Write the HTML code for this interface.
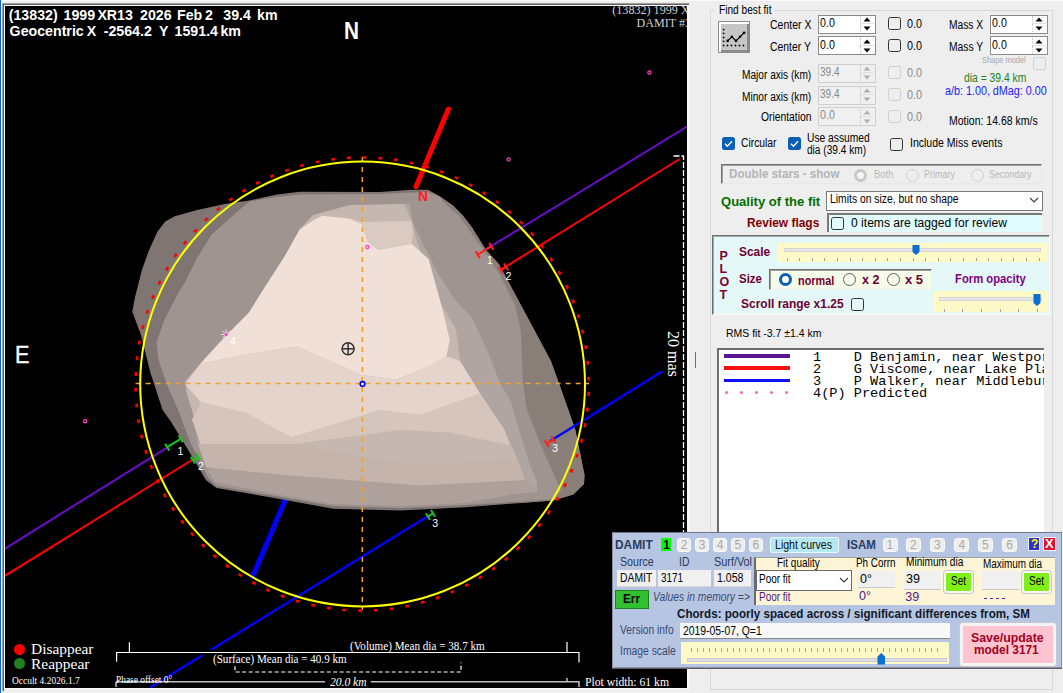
<!DOCTYPE html>
<html><head><meta charset="utf-8"><style>
html,body{margin:0;padding:0;}
body{width:1063px;height:693px;overflow:hidden;position:relative;background:#eeeeee;}
.t{position:absolute;white-space:nowrap;}
.b{position:absolute;}
.plot{position:absolute;left:0;top:0;}
</style></head><body>
<div class="b" style="left:0px;top:0px;width:1063px;height:1px;background:#fafafa"></div><div class="b" style="left:0px;top:0px;width:1px;height:693px;background:#1060d0"></div><div class="b" style="left:1px;top:0px;width:1px;height:693px;background:#f8f8f8"></div><div class="b" style="left:2px;top:3px;width:2px;height:688px;background:#9aa29a"></div><div class="b" style="left:2px;top:3px;width:687px;height:2px;background:#9aa29a"></div><div class="b" style="left:3px;top:4px;width:1px;height:687px;background:#6a5c6a"></div><div class="b" style="left:3px;top:4px;width:686px;height:1px;background:#6a5c6a"></div><div class="b" style="left:4px;top:5px;width:685px;height:684px;background:#fbfbfb"></div><svg class="plot" width="1063" height="693" viewBox="0 0 1063 693">
<defs><clipPath id="pc"><rect x="5" y="6" width="682" height="682"/></clipPath></defs>
<g clip-path="url(#pc)">
<rect x="5" y="6" width="682" height="682" fill="#000"/>
<line x1="286" y1="498" x2="252.7" y2="576.5" stroke="#0000ff" stroke-width="5" stroke-linecap="round"/>
<polygon points="132.3,311.7 134.9,297.6 141.9,269.9 148.8,250.8 157.4,231.8 165.2,221.4 174.8,216.2 197.3,210.1 225,204 249.3,200.6 277,194.5 300,191.8 380,191.9 411.7,189.8 427.6,189.8 440.3,196.7 453,205.4 462.5,215 472,227.6 486,250 499,264.2 530,322 551,361.2 561.2,389.5 575.4,430 584.5,475 584,484 573.3,494.5 553.1,500.6 520.8,503 466,507.2 400,510.6 333,508.8 284,499.7 216.4,488 206,480.3 186.4,447 170.5,421 162.6,410 150.5,373.1 141,335" fill="#7f7572"/>
<polygon points="427.6,189.8 440.3,196.7 453,205.4 462.5,215 472,227.6 486,250 499,264.2 530,322 551,361.2 561.2,389.5 575.4,430 584.5,475 584,484 573.3,494.5 553.1,500.6 520,503 500,470 480,300 440,200" fill="#8a7e79"/>
<polygon points="249.3,201.5 277,197 300,194.5 380,194 411.7,192.5 427.6,192 440.3,196.7 443.5,202.2 459.4,216.5 472,234 485,252 500,275 515,305 520.8,331 522.8,381.4 526.9,409.7 543,450 561.2,490.5 553,499 520.8,501.5 466,505 400,508 333,506 284,497.5 216.4,486 208,478 190,442 178.2,410 167.8,387 158.3,359.3 156.6,342 164.4,319.4 180,290 185.2,282 197.3,257.8 211.1,235.2 231.9,216.2" fill="#a09490"/>
<polygon points="324,212.7 299.7,229.4 284.5,256.7 263,290 249,312.5 225,336.8 200.8,362.8 185.2,381.8 186.9,394 192,410 198,444 215,471.5 320,493 420,500 537,492 537,482 530,465 522,440 511,402 500,383 488,352 472,318 455,300 437,272 430,257 421,240 412,220 410,204 385,204.5 351.5,208.2 321,213.9" fill="#b1a5a1"/>
<polygon points="313,215 350,205 404,204 412,221 416.5,240.3 426,265.7 438,299.8 456,329 460,361 480,393.5 504.6,430 516.8,458.2 525,480 420,490 320,485 215,468 200,444 192,410 186.9,394 185.2,381.8 200.8,362.8 225,336.8 249,312.5 263,290 284.5,256.7 299.7,229.4" fill="#c6b7b0"/>
<polygon points="349.7,218.8 361,222 411.7,221 413,232 411.7,244 378,250 368,242 361,224" fill="#dacac2"/>
<polygon points="313.3,220.3 322.4,215.8 349.7,218.8 361,224 368,242 378,250 411.7,244 428.6,259 440,300 449.8,339.8 446.4,356.2 429.8,366.1 396.6,379.4 361.8,375 335.8,363.4 296.9,346.5 247.5,354.3 200.8,363.4 225,336.8 249,312.5 263,290 284.5,256.7 299.7,229.4" fill="#f0e0d8"/>
<polygon points="185.2,384 200.8,363.4 247.5,354.3 296.9,346.5 335.8,363.4 361.8,375 396.6,379.4 429.8,366.1 446.4,356.2 460,361 480,393.5 420,415 380,410 291.7,437.4 245,412.7 200.8,402.3" fill="#e4d4cc"/>
<polygon points="200.8,402.3 245,412.7 291.7,437.4 380,410 420,415 480,393.5 504.6,430 510,445 449.8,432.6 400,430 294.3,444 200.8,444 192,420" fill="#d6c5bc"/>
<polygon points="198,444 294.3,444 361.8,456.9 420,464.7 466.3,462.5 516.8,458.2 525,480 420,485.5 284,475 206,467.3" fill="#c4b4ab"/>
<polygon points="206,467.3 284,475 420,485.5 525,480 537,490 466,503 400,506 333,504 284,495.8 215,482" fill="#aea09b"/>
<g stroke-width="2" fill="none">
<line x1="5" y1="548.6" x2="167.5" y2="447.3" stroke="#6a0dcc"/>
<line x1="484.5" y1="250.2" x2="690" y2="124.8" stroke="#6a0dcc"/>
<line x1="5" y1="575.8" x2="193.5" y2="459" stroke="#ff0000"/>
<line x1="500.5" y1="269.9" x2="679.6" y2="159" stroke="#ff0000"/>
<line x1="150" y1="687.5" x2="429" y2="515.5" stroke="#0000ff" stroke-width="2.5"/>
<line x1="550.3" y1="441" x2="662.4" y2="371.3" stroke="#0000ff" stroke-width="2.5"/>
</g>
<line x1="448.4" y1="109" x2="416" y2="186.7" stroke="#ff0000" stroke-width="5" stroke-linecap="round"/>
<g stroke="#f0a030" stroke-width="1.5" fill="none">
<line x1="135.6" y1="383.6" x2="589" y2="383.6" stroke-dasharray="5 5"/>
<line x1="362.3" y1="157" x2="362.3" y2="610" stroke-dasharray="5 5"/>
</g>
<circle cx="362.6" cy="384" r="222.4" fill="none" stroke="#ffff00" stroke-width="2"/>
<circle cx="362.2" cy="384" r="226.6" fill="none" stroke="#ff0000" stroke-width="2.6" stroke-dasharray="3.9 11.919" stroke-dashoffset="7.9"/>
<path d="M673.5 156 H683.5 V620" fill="none" stroke="#fff" stroke-width="1.3" stroke-dasharray="6 2"/>
<circle cx="362.5" cy="383.9" r="2.3" fill="#fff" stroke="#0000ff" stroke-width="1.6"/>
<g stroke="#303030" stroke-width="1.5" fill="none"><circle cx="348.1" cy="348.8" r="6"/><line x1="342" y1="348.8" x2="354.2" y2="348.8"/><line x1="348.1" y1="342.7" x2="348.1" y2="354.9"/></g>
<circle cx="85.2" cy="421.3" r="1.6" fill="none" stroke="#ff40c0" stroke-width="1.2"/>
<circle cx="508.6" cy="159.4" r="1.6" fill="none" stroke="#ff40c0" stroke-width="1.2"/>
<circle cx="649.4" cy="72.5" r="1.6" fill="none" stroke="#ff40c0" stroke-width="1.2"/>
<circle cx="367.3" cy="247" r="1.6" fill="none" stroke="#ff40c0" stroke-width="1.2"/>
<g stroke="#f0d0f0" stroke-width="1"><line x1="221" y1="334.4" x2="231" y2="334.4"/><line x1="226.1" y1="329.5" x2="226.1" y2="339.5"/><line x1="222.5" y1="330.8" x2="229.7" y2="338"/><line x1="229.7" y1="330.8" x2="222.5" y2="338"/></g>
<circle cx="226.1" cy="334.4" r="1.5" fill="#ff40c0"/>
<g transform="translate(484.5 250.5) rotate(-31.7)" stroke="#ff2020" stroke-width="2" fill="none"><line x1="-8" y1="0" x2="8" y2="0"/><line x1="-8" y1="-4" x2="-8" y2="4"/><line x1="8" y1="-4" x2="8" y2="4"/></g>
<g transform="translate(503.5 268.5) rotate(-31.7)" stroke="#ff2020" stroke-width="2" fill="none"><line x1="-3" y1="0" x2="3" y2="0"/><line x1="-3" y1="-4" x2="-3" y2="4"/><line x1="3" y1="-4" x2="3" y2="4"/></g>
<g transform="translate(550 441.5) rotate(-31.7)" stroke="#ff2020" stroke-width="2" fill="none"><line x1="-4" y1="0" x2="4" y2="0"/><line x1="-4" y1="-4" x2="-4" y2="4"/><line x1="4" y1="-4" x2="4" y2="4"/></g>
<g transform="translate(174 443) rotate(-31.7)" stroke="#20c020" stroke-width="2" fill="none"><line x1="-8" y1="0" x2="8" y2="0"/><line x1="-8" y1="-4" x2="-8" y2="4"/><line x1="8" y1="-4" x2="8" y2="4"/></g>
<g transform="translate(195.5 458.5) rotate(-31.7)" stroke="#20c020" stroke-width="2" fill="none"><line x1="-3" y1="0" x2="3" y2="0"/><line x1="-3" y1="-4" x2="-3" y2="4"/><line x1="3" y1="-4" x2="3" y2="4"/></g>
<g transform="translate(430.5 515) rotate(-31.7)" stroke="#20c020" stroke-width="2" fill="none"><line x1="-3" y1="0" x2="3" y2="0"/><line x1="-3" y1="-4" x2="-3" y2="4"/><line x1="3" y1="-4" x2="3" y2="4"/></g>
<rect x="116" y="649.8" width="464" height="5.4" fill="#000"/>
<g stroke="#fff" stroke-width="1.2" fill="none">
<path d="M116.6 661.8 V652.5 H579 V662.5"/>
<path d="M129.4 642.2 V652.5 M567 641.9 V652"/>
<path d="M235 666.2 V672 H461 V662.5" stroke-dasharray="4 2.5"/>
</g>
<g stroke="#c0c0c0" stroke-width="1.5" fill="none"><path d="M116 681.8 H325 M370.8 681.8 H579 V687 M567 678 V681.8 M116 681.8 V687"/></g>
</g></svg><div style="position:absolute;left:5px;top:6px;width:682px;height:682px;overflow:hidden"><div style="position:absolute;left:-5px;top:-6px"><div class="t" style="left:8.75px;top:8.34px;font:normal bold 14.20px/1 'Liberation Sans', sans-serif;color:#ffffff;">(13832)</div>
<div class="t" style="left:63.50px;top:8.34px;font:normal bold 14.20px/1 'Liberation Sans', sans-serif;color:#ffffff;">1999</div>
<div class="t" style="left:97.40px;top:8.34px;font:normal bold 14.20px/1 'Liberation Sans', sans-serif;color:#ffffff;">XR13</div>
<div class="t" style="left:140.00px;top:8.34px;font:normal bold 14.20px/1 'Liberation Sans', sans-serif;color:#ffffff;">2026</div>
<div class="t" style="left:177.00px;top:8.34px;font:normal bold 14.20px/1 'Liberation Sans', sans-serif;color:#ffffff;">Feb</div>
<div class="t" style="left:204.90px;top:8.34px;font:normal bold 14.20px/1 'Liberation Sans', sans-serif;color:#ffffff;">2</div>
<div class="t" style="left:223.30px;top:8.34px;font:normal bold 14.20px/1 'Liberation Sans', sans-serif;color:#ffffff;">39.4</div>
<div class="t" style="left:257.10px;top:8.34px;font:normal bold 14.20px/1 'Liberation Sans', sans-serif;color:#ffffff;">km</div>
<div class="t" style="left:9.60px;top:23.84px;font:normal bold 14.20px/1 'Liberation Sans', sans-serif;color:#ffffff;">Geocentric</div>
<div class="t" style="left:86.80px;top:23.84px;font:normal bold 14.20px/1 'Liberation Sans', sans-serif;color:#ffffff;">X</div>
<div class="t" style="left:103.70px;top:23.84px;font:normal bold 14.20px/1 'Liberation Sans', sans-serif;color:#ffffff;">-2564.2</div>
<div class="t" style="left:159.00px;top:23.84px;font:normal bold 14.20px/1 'Liberation Sans', sans-serif;color:#ffffff;">Y</div>
<div class="t" style="left:174.60px;top:23.84px;font:normal bold 14.20px/1 'Liberation Sans', sans-serif;color:#ffffff;">1591.4</div>
<div class="t" style="left:220.40px;top:23.84px;font:normal bold 14.20px/1 'Liberation Sans', sans-serif;color:#ffffff;">km</div>
<div class="t" style="left:343.90px;top:20.46px;font:normal bold 23.50px/1 'Liberation Sans', sans-serif;color:#ffffff;transform:scaleX(0.8841);transform-origin:0 0;">N</div>
<div class="t" style="left:14.70px;top:342.68px;font:normal normal 24.00px/1 'Liberation Sans', sans-serif;color:#ffffff;transform:scaleX(0.8996);transform-origin:0 0;-webkit-text-stroke:0.4px #fff;">E</div>
<div class="t" style="left:418.00px;top:189.07px;font:normal bold 14.00px/1 'Liberation Sans', sans-serif;color:#ff2020;transform:scaleX(0.9893);transform-origin:0 0;">N</div>
<div class="t" style="left:487.00px;top:254.73px;font:normal normal 10.50px/1 'Liberation Sans', sans-serif;color:#ffffff;">1</div>
<div class="t" style="left:505.40px;top:270.63px;font:normal normal 10.50px/1 'Liberation Sans', sans-serif;color:#ffffff;">2</div>
<div class="t" style="left:552.30px;top:443.33px;font:normal normal 10.50px/1 'Liberation Sans', sans-serif;color:#ffffff;">3</div>
<div class="t" style="left:177.40px;top:445.63px;font:normal normal 10.50px/1 'Liberation Sans', sans-serif;color:#ffffff;">1</div>
<div class="t" style="left:198.00px;top:461.23px;font:normal normal 10.50px/1 'Liberation Sans', sans-serif;color:#ffffff;">2</div>
<div class="t" style="left:432.30px;top:517.53px;font:normal normal 10.50px/1 'Liberation Sans', sans-serif;color:#ffffff;">3</div>
<div class="t" style="left:230.00px;top:336.33px;font:normal normal 10.50px/1 'Liberation Sans', sans-serif;color:#ffffff;">4</div>
<div class="t" style="left:612.30px;top:4.39px;font:normal normal 12.10px/1 'Liberation Serif', serif;color:#d0d0d0;">(13832) 1999 XR13</div>
<div class="t" style="left:636.60px;top:17.19px;font:normal normal 12.10px/1 'Liberation Serif', serif;color:#d0d0d0;">DAMIT #3171</div>
<div class="b" style="left:14px;top:643.5px;width:11px;height:11px;border-radius:50%;background:#ff0000"></div>
<div class="b" style="left:14px;top:657.5px;width:11px;height:11px;border-radius:50%;background:#208020"></div>
<div class="t" style="left:31.00px;top:641.21px;font:normal normal 15.30px/1 'Liberation Serif', serif;color:#ffffff;transform:scaleX(1.0076);transform-origin:0 0;">Disappear</div>
<div class="t" style="left:31.00px;top:655.81px;font:normal normal 15.30px/1 'Liberation Serif', serif;color:#ffffff;transform:scaleX(1.0111);transform-origin:0 0;">Reappear</div>
<div class="t" style="left:12.20px;top:675.09px;font:normal normal 11.00px/1 'Liberation Serif', serif;color:#ffffff;transform:scaleX(0.8601);transform-origin:0 0;">Occult 4.2026.1.7</div>
<div class="t" style="left:349.60px;top:640.22px;font:normal normal 12.50px/1 'Liberation Serif', serif;color:#ffffff;transform:scaleX(0.8907);transform-origin:0 0;">(Volume) Mean dia = 38.7 km</div>
<div class="t" style="left:213.00px;top:652.72px;font:normal normal 12.50px/1 'Liberation Serif', serif;color:#ffffff;transform:scaleX(0.8862);transform-origin:0 0;">(Surface) Mean dia = 40.9 km</div>
<div class="t" style="left:116.00px;top:675.17px;font:normal normal 10.00px/1 'Liberation Serif', serif;color:#ffffff;transform:scaleX(0.9379);transform-origin:0 0;">Phase offset 0°</div>
<div class="t" style="left:330.00px;top:674.94px;font:italic normal 13.50px/1 'Liberation Serif', serif;color:#ffffff;transform:scaleX(0.8563);transform-origin:0 0;">20.0 km</div>
<div class="t" style="left:585.30px;top:674.94px;font:normal normal 13.50px/1 'Liberation Serif', serif;color:#ffffff;transform:scaleX(0.8648);transform-origin:0 0;">Plot width: 61 km</div>
<div class="t" style="left:680.70px;top:331.3px;font:16.00px/1 'Liberation Serif',serif;color:#fff;transform:rotate(90deg);transform-origin:0 0;">20 mas</div></div></div><div class="b" style="left:710px;top:9.5px;width:343px;height:680px;border:1px solid #d8d8d8;box-sizing:border-box"></div>
<div class="b" style="left:715px;top:2px;width:60px;height:14px;background:#eeeeee"></div>
<div class="t" style="left:718.50px;top:4.26px;font:normal normal 12.20px/1 'Liberation Sans', sans-serif;color:#000;transform:scaleX(0.8325);transform-origin:0 0;">Find best fit</div>
<div class="b" style="left:718px;top:21px;width:32px;height:32px;background:#c6c6c6;border:1px solid #8a8e8a;box-shadow:inset 2px 2px #ffffff, inset -2px -2px #8a8a8a;box-sizing:border-box"></div>
<svg class="b" style="left:718px;top:21px" width="32" height="32"><g fill="#000"><circle cx="5.6" cy="8.6" r="0.9"/><circle cx="5.6" cy="12.3" r="0.9"/><circle cx="5.6" cy="16.5" r="0.9"/><circle cx="5.6" cy="20.3" r="0.9"/><circle cx="5.6" cy="24.5" r="0.9"/><circle cx="9.5" cy="24.5" r="0.9"/><circle cx="13.5" cy="24.5" r="0.9"/><circle cx="17.5" cy="24.5" r="0.9"/><circle cx="21.5" cy="24.5" r="0.9"/><circle cx="25.5" cy="24.5" r="0.9"/></g><path d="M9.6 19.9 L13.9 15.8 L18 19.9 L22 15.8 L26.1 11.8" stroke="#000" stroke-width="1.2" fill="none"/><g fill="#000"><circle cx="9.6" cy="19.9" r="1.3"/><circle cx="13.9" cy="15.8" r="1.3"/><circle cx="18" cy="19.9" r="1.3"/><circle cx="22" cy="15.8" r="1.3"/><circle cx="26.1" cy="11.8" r="1.4"/></g></svg>
<div class="t" style="left:770.20px;top:18.61px;font:normal normal 12.50px/1 'Liberation Sans', sans-serif;color:#000;transform:scaleX(0.8393);transform-origin:0 0;">Center X</div>
<div class="t" style="left:770.20px;top:40.61px;font:normal normal 12.50px/1 'Liberation Sans', sans-serif;color:#000;transform:scaleX(0.8310);transform-origin:0 0;">Center Y</div>
<div class="t" style="left:742.40px;top:69.21px;font:normal normal 12.50px/1 'Liberation Sans', sans-serif;color:#000;transform:scaleX(0.8101);transform-origin:0 0;">Major axis (km)</div>
<div class="t" style="left:742.40px;top:91.21px;font:normal normal 12.50px/1 'Liberation Sans', sans-serif;color:#000;transform:scaleX(0.8101);transform-origin:0 0;">Minor axis (km)</div>
<div class="t" style="left:760.50px;top:111.01px;font:normal normal 12.50px/1 'Liberation Sans', sans-serif;color:#000;transform:scaleX(0.8258);transform-origin:0 0;">Orientation</div>
<div class="b" style="left:818px;top:14.5px;width:58px;height:19px;border:1px solid #8a8a8a;background:#ffffff;box-sizing:border-box"></div>
<div class="b" style="left:860px;top:16px;width:14px;height:8px;border-left:1px dotted #c8c8c8;border-bottom:1px solid #e0e0e0;box-sizing:border-box"></div>
<div class="b" style="left:860px;top:24px;width:14px;height:8px;border-left:1px dotted #c8c8c8;box-sizing:border-box"></div>
<svg class="b" style="left:860px;top:15px" width="14" height="18"><path d="M3.5 6.5 L7 2.5 L10.5 6.5Z M3.5 11.5 L7 15.5 L10.5 11.5Z" fill="#000000"/></svg>
<div class="t" style="left:820.30px;top:16.79px;font:normal normal 12.00px/1 'Liberation Sans', sans-serif;color:#000000;transform:scaleX(0.8873);transform-origin:0 0;">0.0</div>
<div class="b" style="left:818px;top:36.3px;width:58px;height:19px;border:1px solid #8a8a8a;background:#ffffff;box-sizing:border-box"></div>
<div class="b" style="left:860px;top:37.8px;width:14px;height:8px;border-left:1px dotted #c8c8c8;border-bottom:1px solid #e0e0e0;box-sizing:border-box"></div>
<div class="b" style="left:860px;top:45.8px;width:14px;height:8px;border-left:1px dotted #c8c8c8;box-sizing:border-box"></div>
<svg class="b" style="left:860px;top:36.8px" width="14" height="18"><path d="M3.5 6.5 L7 2.5 L10.5 6.5Z M3.5 11.5 L7 15.5 L10.5 11.5Z" fill="#000000"/></svg>
<div class="t" style="left:820.30px;top:38.59px;font:normal normal 12.00px/1 'Liberation Sans', sans-serif;color:#000000;transform:scaleX(0.8873);transform-origin:0 0;">0.0</div>
<div class="b" style="left:818px;top:63.7px;width:58px;height:19px;border:1px solid #cfcfcf;background:#f0f0f0;box-sizing:border-box"></div>
<div class="b" style="left:860px;top:65.2px;width:14px;height:8px;border-left:1px dotted #c8c8c8;border-bottom:1px solid #e0e0e0;box-sizing:border-box"></div>
<div class="b" style="left:860px;top:73.2px;width:14px;height:8px;border-left:1px dotted #c8c8c8;box-sizing:border-box"></div>
<svg class="b" style="left:860px;top:64.2px" width="14" height="18"><path d="M3.5 6.5 L7 2.5 L10.5 6.5Z M3.5 11.5 L7 15.5 L10.5 11.5Z" fill="#b0b0b0"/></svg>
<div class="t" style="left:820.30px;top:65.99px;font:normal normal 12.00px/1 'Liberation Sans', sans-serif;color:#8a8a8a;transform:scaleX(0.8350);transform-origin:0 0;">39.4</div>
<div class="b" style="left:818px;top:85.6px;width:58px;height:19px;border:1px solid #cfcfcf;background:#f0f0f0;box-sizing:border-box"></div>
<div class="b" style="left:860px;top:87.1px;width:14px;height:8px;border-left:1px dotted #c8c8c8;border-bottom:1px solid #e0e0e0;box-sizing:border-box"></div>
<div class="b" style="left:860px;top:95.1px;width:14px;height:8px;border-left:1px dotted #c8c8c8;box-sizing:border-box"></div>
<svg class="b" style="left:860px;top:86.1px" width="14" height="18"><path d="M3.5 6.5 L7 2.5 L10.5 6.5Z M3.5 11.5 L7 15.5 L10.5 11.5Z" fill="#b0b0b0"/></svg>
<div class="t" style="left:820.30px;top:87.89px;font:normal normal 12.00px/1 'Liberation Sans', sans-serif;color:#8a8a8a;transform:scaleX(0.8350);transform-origin:0 0;">39.4</div>
<div class="b" style="left:818px;top:107.2px;width:58px;height:19px;border:1px solid #cfcfcf;background:#f0f0f0;box-sizing:border-box"></div>
<div class="b" style="left:860px;top:108.7px;width:14px;height:8px;border-left:1px dotted #c8c8c8;border-bottom:1px solid #e0e0e0;box-sizing:border-box"></div>
<div class="b" style="left:860px;top:116.7px;width:14px;height:8px;border-left:1px dotted #c8c8c8;box-sizing:border-box"></div>
<svg class="b" style="left:860px;top:107.7px" width="14" height="18"><path d="M3.5 6.5 L7 2.5 L10.5 6.5Z M3.5 11.5 L7 15.5 L10.5 11.5Z" fill="#b0b0b0"/></svg>
<div class="t" style="left:820.30px;top:109.49px;font:normal normal 12.00px/1 'Liberation Sans', sans-serif;color:#8a8a8a;transform:scaleX(0.8873);transform-origin:0 0;">0.0</div>
<div class="b" style="left:888px;top:17.3px;width:13px;height:13px;border:1px solid #333333;border-radius:2.5px;box-sizing:border-box;background:transparent"></div>
<div class="t" style="left:907.00px;top:18.11px;font:normal normal 12.50px/1 'Liberation Sans', sans-serif;color:#000;transform:scaleX(0.8633);transform-origin:0 0;">0.0</div>
<div class="b" style="left:888px;top:39.3px;width:13px;height:13px;border:1px solid #333333;border-radius:2.5px;box-sizing:border-box;background:transparent"></div>
<div class="t" style="left:907.00px;top:40.11px;font:normal normal 12.50px/1 'Liberation Sans', sans-serif;color:#000;transform:scaleX(0.8633);transform-origin:0 0;">0.0</div>
<div class="b" style="left:888px;top:66.2px;width:13px;height:13px;border:1px solid #d0d0d0;border-radius:2.5px;box-sizing:border-box;background:transparent"></div>
<div class="t" style="left:907.00px;top:67.01px;font:normal normal 12.50px/1 'Liberation Sans', sans-serif;color:#8a8a8a;transform:scaleX(0.8633);transform-origin:0 0;">0.0</div>
<div class="b" style="left:888px;top:88.3px;width:13px;height:13px;border:1px solid #d0d0d0;border-radius:2.5px;box-sizing:border-box;background:transparent"></div>
<div class="t" style="left:907.00px;top:89.11px;font:normal normal 12.50px/1 'Liberation Sans', sans-serif;color:#8a8a8a;transform:scaleX(0.8633);transform-origin:0 0;">0.0</div>
<div class="b" style="left:888px;top:109.8px;width:13px;height:13px;border:1px solid #d0d0d0;border-radius:2.5px;box-sizing:border-box;background:transparent"></div>
<div class="t" style="left:907.00px;top:110.61px;font:normal normal 12.50px/1 'Liberation Sans', sans-serif;color:#8a8a8a;transform:scaleX(0.8633);transform-origin:0 0;">0.0</div>
<div class="t" style="left:949.30px;top:19.01px;font:normal normal 12.50px/1 'Liberation Sans', sans-serif;color:#000;transform:scaleX(0.8182);transform-origin:0 0;">Mass X</div>
<div class="t" style="left:949.30px;top:41.01px;font:normal normal 12.50px/1 'Liberation Sans', sans-serif;color:#000;transform:scaleX(0.8227);transform-origin:0 0;">Mass Y</div>
<div class="b" style="left:990px;top:14.5px;width:58px;height:19px;border:1px solid #8a8a8a;background:#ffffff;box-sizing:border-box"></div>
<div class="b" style="left:1032px;top:16px;width:14px;height:8px;border-left:1px dotted #c8c8c8;border-bottom:1px solid #e0e0e0;box-sizing:border-box"></div>
<div class="b" style="left:1032px;top:24px;width:14px;height:8px;border-left:1px dotted #c8c8c8;box-sizing:border-box"></div>
<svg class="b" style="left:1032px;top:15px" width="14" height="18"><path d="M3.5 6.5 L7 2.5 L10.5 6.5Z M3.5 11.5 L7 15.5 L10.5 11.5Z" fill="#000000"/></svg>
<div class="t" style="left:992.30px;top:16.79px;font:normal normal 12.00px/1 'Liberation Sans', sans-serif;color:#000000;transform:scaleX(0.8873);transform-origin:0 0;">0.0</div>
<div class="b" style="left:990px;top:36.3px;width:58px;height:19px;border:1px solid #8a8a8a;background:#ffffff;box-sizing:border-box"></div>
<div class="b" style="left:1032px;top:37.8px;width:14px;height:8px;border-left:1px dotted #c8c8c8;border-bottom:1px solid #e0e0e0;box-sizing:border-box"></div>
<div class="b" style="left:1032px;top:45.8px;width:14px;height:8px;border-left:1px dotted #c8c8c8;box-sizing:border-box"></div>
<svg class="b" style="left:1032px;top:36.8px" width="14" height="18"><path d="M3.5 6.5 L7 2.5 L10.5 6.5Z M3.5 11.5 L7 15.5 L10.5 11.5Z" fill="#000000"/></svg>
<div class="t" style="left:992.30px;top:38.59px;font:normal normal 12.00px/1 'Liberation Sans', sans-serif;color:#000000;transform:scaleX(0.8873);transform-origin:0 0;">0.0</div>
<div class="t" style="left:982.00px;top:56.37px;font:normal normal 9.00px/1 'Liberation Sans', sans-serif;color:#a8a8a8;transform:scaleX(0.8240);transform-origin:0 0;">Shape model</div>
<div class="b" style="left:1033px;top:56.6px;width:13px;height:13px;border:1px solid #d0d0d0;border-radius:2.5px;box-sizing:border-box;background:transparent"></div>
<div class="t" style="left:964.00px;top:72.01px;font:normal normal 12.50px/1 'Liberation Sans', sans-serif;color:#208020;transform:scaleX(0.8277);transform-origin:0 0;">dia = 39.4 km</div>
<div class="t" style="left:945.30px;top:84.81px;font:normal normal 12.50px/1 'Liberation Sans', sans-serif;color:#2020ff;transform:scaleX(0.8609);transform-origin:0 0;">a/b: 1.00, dMag: 0.00</div>
<div class="t" style="left:949.30px;top:114.91px;font:normal normal 12.50px/1 'Liberation Sans', sans-serif;color:#000;transform:scaleX(0.8400);transform-origin:0 0;">Motion: 14.68 km/s</div>
<div class="b" style="left:722px;top:137.2px;width:13px;height:13px;background:#0a5fb4;border-radius:2.5px"></div><svg class="b" style="left:722px;top:137.2px" width="13" height="13"><path d="M3 6.8 L5.4 9.2 L10 4.2" stroke="#fff" stroke-width="1.3" fill="none"/></svg>
<div class="t" style="left:740.60px;top:137.21px;font:normal normal 12.50px/1 'Liberation Sans', sans-serif;color:#000;transform:scaleX(0.8221);transform-origin:0 0;">Circular</div>
<div class="b" style="left:788px;top:137.2px;width:13px;height:13px;background:#0a5fb4;border-radius:2.5px"></div><svg class="b" style="left:788px;top:137.2px" width="13" height="13"><path d="M3 6.8 L5.4 9.2 L10 4.2" stroke="#fff" stroke-width="1.3" fill="none"/></svg>
<div class="t" style="left:807.30px;top:131.81px;font:normal normal 12.50px/1 'Liberation Sans', sans-serif;color:#000;transform:scaleX(0.8204);transform-origin:0 0;">Use assumed</div>
<div class="t" style="left:807.30px;top:144.31px;font:normal normal 12.50px/1 'Liberation Sans', sans-serif;color:#000;transform:scaleX(0.8089);transform-origin:0 0;">dia (39.4 km)</div>
<div class="b" style="left:890px;top:137.6px;width:13px;height:13px;border:1px solid #333333;border-radius:2.5px;box-sizing:border-box;background:transparent"></div>
<div class="t" style="left:909.60px;top:137.11px;font:normal normal 12.50px/1 'Liberation Sans', sans-serif;color:#000;transform:scaleX(0.8417);transform-origin:0 0;">Include Miss events</div>
<div class="b" style="left:721px;top:164px;width:321px;height:20px;border:1px solid;border-color:#707070 #e8e8e8 #e8e8e8 #707070;box-shadow:inset 1px 1px #a0a0a0;box-sizing:border-box"></div>
<div class="t" style="left:728.50px;top:168.01px;font:normal bold 12.50px/1 'Liberation Sans', sans-serif;color:#b4b4b4;transform:scaleX(0.9301);transform-origin:0 0;">Double stars - show</div>
<div class="b" style="left:854px;top:168.6px;width:13px;height:13px;border:3.5px solid #c8c8c8;border-radius:50%;box-sizing:border-box;background:#f4f4f4"></div>
<div class="t" style="left:873.50px;top:169.25px;font:normal normal 11.00px/1 'Liberation Sans', sans-serif;color:#b8b8b8;transform:scaleX(0.8618);transform-origin:0 0;">Both</div>
<div class="b" style="left:906px;top:168.6px;width:13px;height:13px;border:1px solid #d0d0d0;border-radius:50%;box-sizing:border-box"></div>
<div class="t" style="left:924.00px;top:169.25px;font:normal normal 11.00px/1 'Liberation Sans', sans-serif;color:#b8b8b8;transform:scaleX(0.8183);transform-origin:0 0;">Primary</div>
<div class="b" style="left:970.7px;top:168.6px;width:13px;height:13px;border:1px solid #d0d0d0;border-radius:50%;box-sizing:border-box"></div>
<div class="t" style="left:989.00px;top:169.25px;font:normal normal 11.00px/1 'Liberation Sans', sans-serif;color:#b8b8b8;transform:scaleX(0.8081);transform-origin:0 0;">Secondary</div>
<div class="t" style="left:720.80px;top:196.16px;font:normal bold 12.80px/1 'Liberation Sans', sans-serif;color:#007000;transform:scaleX(1.0183);transform-origin:0 0;">Quality of the fit</div>
<div class="b" style="left:826.3px;top:190.6px;width:216.4px;height:20px;background:#fff;border:1px solid #7a7a7a;box-sizing:border-box"></div>
<div class="t" style="left:829.50px;top:192.61px;font:normal normal 12.50px/1 'Liberation Sans', sans-serif;color:#000;transform:scaleX(0.8293);transform-origin:0 0;">Limits on size, but no shape</div>
<svg class="b" style="left:1029px;top:196px" width="10" height="8"><path d="M1 2 L5 6 L9 2" stroke="#404040" stroke-width="1.2" fill="none"/></svg>
<div class="t" style="left:746.70px;top:216.76px;font:normal bold 12.80px/1 'Liberation Sans', sans-serif;color:#800000;transform:scaleX(0.9324);transform-origin:0 0;">Review flags</div>
<div class="b" style="left:826.8px;top:213px;width:215px;height:19px;background:#e0fcfc;border-top:2px solid #787878;border-left:2px solid #787878;box-sizing:border-box"></div>
<div class="b" style="left:831px;top:216.8px;width:13px;height:13px;border:1px solid #333333;border-radius:2.5px;box-sizing:border-box;background:transparent"></div>
<div class="t" style="left:850.50px;top:216.61px;font:normal normal 12.50px/1 'Liberation Sans', sans-serif;color:#000;transform:scaleX(0.9676);transform-origin:0 0;">0 items are tagged for review</div>
<div class="b" style="left:711.8px;top:234.8px;width:338px;height:80.2px;background:#e4f8f8;border:1px solid;border-color:#707070 #f8f8f8 #f8f8f8 #707070;box-shadow:inset 1px 1px #a8a8a8;box-sizing:border-box"></div>
<div class="t" style="left:719.50px;top:249.71px;font:normal bold 12.50px/1 'Liberation Sans', sans-serif;color:#800030;">P</div>
<div class="t" style="left:719.50px;top:262.71px;font:normal bold 12.50px/1 'Liberation Sans', sans-serif;color:#800030;">L</div>
<div class="t" style="left:719.50px;top:275.71px;font:normal bold 12.50px/1 'Liberation Sans', sans-serif;color:#800030;">O</div>
<div class="t" style="left:719.50px;top:288.61px;font:normal bold 12.50px/1 'Liberation Sans', sans-serif;color:#800030;">T</div>
<div class="t" style="left:739.40px;top:246.26px;font:normal bold 12.80px/1 'Liberation Sans', sans-serif;color:#700030;transform:scaleX(0.9328);transform-origin:0 0;">Scale</div>
<div class="b" style="left:778px;top:243px;width:269px;height:18.5px;background:#fff9c8"></div>
<div class="b" style="left:784px;top:248.2px;width:257px;height:4px;background:#e6e6e6;border:1px solid #d6d6d6;box-sizing:border-box"></div>
<div class="b" style="left:786.5px;top:258px;width:1px;height:3px;background:#a0a0a0"></div>
<div class="b" style="left:799.1px;top:258px;width:1px;height:3px;background:#a0a0a0"></div>
<div class="b" style="left:811.7px;top:258px;width:1px;height:3px;background:#a0a0a0"></div>
<div class="b" style="left:824.3px;top:258px;width:1px;height:3px;background:#a0a0a0"></div>
<div class="b" style="left:836.9px;top:258px;width:1px;height:3px;background:#a0a0a0"></div>
<div class="b" style="left:849.5px;top:258px;width:1px;height:3px;background:#a0a0a0"></div>
<div class="b" style="left:862.1px;top:258px;width:1px;height:3px;background:#a0a0a0"></div>
<div class="b" style="left:874.7px;top:258px;width:1px;height:3px;background:#a0a0a0"></div>
<div class="b" style="left:887.3px;top:258px;width:1px;height:3px;background:#a0a0a0"></div>
<div class="b" style="left:899.9px;top:258px;width:1px;height:3px;background:#a0a0a0"></div>
<div class="b" style="left:912.5px;top:258px;width:1px;height:3px;background:#a0a0a0"></div>
<div class="b" style="left:925.1px;top:258px;width:1px;height:3px;background:#a0a0a0"></div>
<div class="b" style="left:937.7px;top:258px;width:1px;height:3px;background:#a0a0a0"></div>
<div class="b" style="left:950.3px;top:258px;width:1px;height:3px;background:#a0a0a0"></div>
<div class="b" style="left:962.9px;top:258px;width:1px;height:3px;background:#a0a0a0"></div>
<div class="b" style="left:975.5px;top:258px;width:1px;height:3px;background:#a0a0a0"></div>
<div class="b" style="left:988.1px;top:258px;width:1px;height:3px;background:#a0a0a0"></div>
<div class="b" style="left:1000.7px;top:258px;width:1px;height:3px;background:#a0a0a0"></div>
<div class="b" style="left:1013.3px;top:258px;width:1px;height:3px;background:#a0a0a0"></div>
<div class="b" style="left:1025.9px;top:258px;width:1px;height:3px;background:#a0a0a0"></div>
<div class="b" style="left:1038.5px;top:258px;width:1px;height:3px;background:#a0a0a0"></div>
<svg class="b" style="left:911.7px;top:245.2px" width="9" height="11"><path d="M0.5 0 H7.5 V7 L4 10 L0.5 7Z" fill="#0a6fd0"/></svg>
<div class="t" style="left:739.40px;top:272.96px;font:normal bold 12.80px/1 'Liberation Sans', sans-serif;color:#700030;transform:scaleX(0.8941);transform-origin:0 0;">Size</div>
<div class="b" style="left:769.2px;top:269px;width:162.5px;height:21.3px;background:#f4fbe8;border:1px solid;border-color:#707070 #f0f0f0 #f0f0f0 #707070;box-shadow:inset 1px 1px #a0a0a0;box-sizing:border-box"></div>
<div class="b" style="left:778.7px;top:273.3px;width:13px;height:13px;border:3.5px solid #0a5fb4;border-radius:50%;box-sizing:border-box;background:#fff"></div>
<div class="t" style="left:797.80px;top:275.31px;font:normal bold 12.50px/1 'Liberation Sans', sans-serif;color:#700030;transform:scaleX(0.8686);transform-origin:0 0;">normal</div>
<div class="b" style="left:842.7px;top:273.3px;width:13px;height:13px;border:1px solid #606060;border-radius:50%;box-sizing:border-box"></div>
<div class="t" style="left:861.50px;top:273.51px;font:normal bold 12.50px/1 'Liberation Sans', sans-serif;color:#700030;transform:scaleX(1.0072);transform-origin:0 0;">x 2</div>
<div class="b" style="left:887px;top:273.3px;width:13px;height:13px;border:1px solid #606060;border-radius:50%;box-sizing:border-box"></div>
<div class="t" style="left:905.40px;top:273.51px;font:normal bold 12.50px/1 'Liberation Sans', sans-serif;color:#700030;transform:scaleX(1.0417);transform-origin:0 0;">x 5</div>
<div class="t" style="left:955.00px;top:272.96px;font:normal bold 12.80px/1 'Liberation Sans', sans-serif;color:#800080;transform:scaleX(0.8797);transform-origin:0 0;">Form opacity</div>
<div class="t" style="left:740.70px;top:297.76px;font:normal bold 12.80px/1 'Liberation Sans', sans-serif;color:#700030;transform:scaleX(0.9364);transform-origin:0 0;">Scroll range x1.25</div>
<div class="b" style="left:851px;top:298.4px;width:13px;height:13px;border:1px solid #333333;border-radius:2.5px;box-sizing:border-box;background:transparent"></div>
<div class="b" style="left:933px;top:291.2px;width:114.5px;height:20.8px;background:#fff9c8"></div>
<div class="b" style="left:939px;top:297.2px;width:102.5px;height:4px;background:#e6e6e6;border:1px solid #d6d6d6;box-sizing:border-box"></div>
<div class="b" style="left:943.5px;top:309px;width:1px;height:3px;background:#a0a0a0"></div>
<div class="b" style="left:962.2px;top:309px;width:1px;height:3px;background:#a0a0a0"></div>
<div class="b" style="left:980.9px;top:309px;width:1px;height:3px;background:#a0a0a0"></div>
<div class="b" style="left:999.6px;top:309px;width:1px;height:3px;background:#a0a0a0"></div>
<div class="b" style="left:1018.3px;top:309px;width:1px;height:3px;background:#a0a0a0"></div>
<div class="b" style="left:1037px;top:309px;width:1px;height:3px;background:#a0a0a0"></div>
<svg class="b" style="left:1033px;top:294.2px" width="9" height="13"><path d="M0.5 0 H7.5 V9 L4 12 L0.5 9Z" fill="#0a6fd0"/></svg>
<div class="b" style="left:695.3px;top:351.5px;width:1px;height:16px;background:#707070"></div>
<div class="t" style="left:725.60px;top:328.07px;font:normal normal 11.50px/1 'Liberation Sans', sans-serif;color:#000;transform:scaleX(0.9110);transform-origin:0 0;">RMS fit -3.7 ±1.4 km</div>
<div class="b" style="left:717.3px;top:347.5px;width:327px;height:321px;background:#fff;border-top:2px solid #6e6e6e;border-left:2px solid #6e6e6e;box-sizing:border-box"></div>
<div class="b" style="left:724.2px;top:354.4px;width:65.4px;height:3.2px;background:#5a1590"></div>
<div class="b" style="left:724.2px;top:366.4px;width:65.4px;height:3.2px;background:#ff1010"></div>
<div class="b" style="left:724.2px;top:378.5px;width:65.4px;height:3.2px;background:#1010ff"></div>
<div class="b" style="left:724.8px;top:391px;width:3px;height:3px;background:#ff60c0;border-radius:50%"></div>
<div class="b" style="left:739.85px;top:391px;width:3px;height:3px;background:#ff60c0;border-radius:50%"></div>
<div class="b" style="left:754.9px;top:391px;width:3px;height:3px;background:#ff60c0;border-radius:50%"></div>
<div class="b" style="left:769.95px;top:391px;width:3px;height:3px;background:#ff60c0;border-radius:50%"></div>
<div class="b" style="left:785px;top:391px;width:3px;height:3px;background:#ff60c0;border-radius:50%"></div>
<div class="t" style="left:813px;top:351.44px;width:231px;overflow:hidden;font:13.6px/1 'Liberation Mono',monospace;color:#000;white-space:pre">1    D Benjamin, near Westport</div>
<div class="t" style="left:813px;top:363.29px;width:231px;overflow:hidden;font:13.6px/1 'Liberation Mono',monospace;color:#000;white-space:pre">2    G Viscome, near Lake Placid</div>
<div class="t" style="left:813px;top:375.14px;width:231px;overflow:hidden;font:13.6px/1 'Liberation Mono',monospace;color:#000;white-space:pre">3    P Walker, near Middlebury</div>
<div class="t" style="left:813px;top:386.99px;width:231px;overflow:hidden;font:13.6px/1 'Liberation Mono',monospace;color:#000;white-space:pre">4(P) Predicted</div><div class="b" style="left:612px;top:532.2px;width:450px;height:136px;background:#b6c6e2;border:1px solid #8890a0;border-top-color:#707888;box-sizing:border-box;box-shadow:0 1px #606060"></div>
<div class="t" style="left:615.00px;top:538.66px;font:normal bold 12.80px/1 'Liberation Sans', sans-serif;color:#2a3a60;transform:scaleX(0.9303);transform-origin:0 0;">DAMIT</div>
<div class="b" style="left:660.6px;top:537.9px;width:10.4px;height:13.1px;background:#00ff00"></div>
<div class="t" style="left:663.00px;top:538.81px;font:normal bold 12.50px/1 'Liberation Sans', sans-serif;color:#000;">1</div>
<div class="b" style="left:677px;top:537.5px;width:14px;height:14px;background:#eeeeee;border-radius:3px;border:1px solid #f8f8f8;box-sizing:border-box"></div>
<div class="t" style="left:680.80px;top:538.89px;font:normal normal 12.00px/1 'Liberation Sans', sans-serif;color:#a8a8a8;">2</div>
<div class="b" style="left:695px;top:537.5px;width:14px;height:14px;background:#eeeeee;border-radius:3px;border:1px solid #f8f8f8;box-sizing:border-box"></div>
<div class="t" style="left:698.80px;top:538.89px;font:normal normal 12.00px/1 'Liberation Sans', sans-serif;color:#a8a8a8;">3</div>
<div class="b" style="left:712.9px;top:537.5px;width:14px;height:14px;background:#eeeeee;border-radius:3px;border:1px solid #f8f8f8;box-sizing:border-box"></div>
<div class="t" style="left:716.70px;top:538.89px;font:normal normal 12.00px/1 'Liberation Sans', sans-serif;color:#a8a8a8;">4</div>
<div class="b" style="left:730.8px;top:537.5px;width:14px;height:14px;background:#eeeeee;border-radius:3px;border:1px solid #f8f8f8;box-sizing:border-box"></div>
<div class="t" style="left:734.60px;top:538.89px;font:normal normal 12.00px/1 'Liberation Sans', sans-serif;color:#a8a8a8;">5</div>
<div class="b" style="left:748.6px;top:537.5px;width:14px;height:14px;background:#eeeeee;border-radius:3px;border:1px solid #f8f8f8;box-sizing:border-box"></div>
<div class="t" style="left:752.40px;top:538.89px;font:normal normal 12.00px/1 'Liberation Sans', sans-serif;color:#a8a8a8;">6</div>
<div class="b" style="left:770.3px;top:537.3px;width:68.5px;height:15.7px;background:#b4e8f0;border:1px solid #e8f8ff;border-radius:2px;box-sizing:border-box"></div>
<div class="t" style="left:775.40px;top:538.71px;font:normal normal 12.50px/1 'Liberation Sans', sans-serif;color:#101010;transform:scaleX(0.8457);transform-origin:0 0;">Light curves</div>
<div class="t" style="left:846.90px;top:538.96px;font:normal bold 12.80px/1 'Liberation Sans', sans-serif;color:#2a3a60;transform:scaleX(0.9000);transform-origin:0 0;">ISAM</div>
<div class="b" style="left:882.6px;top:537.5px;width:15px;height:14px;background:#eeeeee;border-radius:3px;border:1px solid #f8f8f8;box-sizing:border-box"></div>
<div class="t" style="left:886.60px;top:538.89px;font:normal normal 12.00px/1 'Liberation Sans', sans-serif;color:#a8a8a8;">1</div>
<div class="b" style="left:906px;top:537.5px;width:15px;height:14px;background:#eeeeee;border-radius:3px;border:1px solid #f8f8f8;box-sizing:border-box"></div>
<div class="t" style="left:910.00px;top:538.89px;font:normal normal 12.00px/1 'Liberation Sans', sans-serif;color:#a8a8a8;">2</div>
<div class="b" style="left:930px;top:537.5px;width:15px;height:14px;background:#eeeeee;border-radius:3px;border:1px solid #f8f8f8;box-sizing:border-box"></div>
<div class="t" style="left:934.00px;top:538.89px;font:normal normal 12.00px/1 'Liberation Sans', sans-serif;color:#a8a8a8;">3</div>
<div class="b" style="left:954.4px;top:537.5px;width:15px;height:14px;background:#eeeeee;border-radius:3px;border:1px solid #f8f8f8;box-sizing:border-box"></div>
<div class="t" style="left:958.40px;top:538.89px;font:normal normal 12.00px/1 'Liberation Sans', sans-serif;color:#a8a8a8;">4</div>
<div class="b" style="left:978px;top:537.5px;width:15px;height:14px;background:#eeeeee;border-radius:3px;border:1px solid #f8f8f8;box-sizing:border-box"></div>
<div class="t" style="left:982.00px;top:538.89px;font:normal normal 12.00px/1 'Liberation Sans', sans-serif;color:#a8a8a8;">5</div>
<div class="b" style="left:1002.2px;top:537.5px;width:15px;height:14px;background:#eeeeee;border-radius:3px;border:1px solid #f8f8f8;box-sizing:border-box"></div>
<div class="t" style="left:1006.20px;top:538.89px;font:normal normal 12.00px/1 'Liberation Sans', sans-serif;color:#a8a8a8;">6</div>
<div class="b" style="left:1028.4px;top:537px;width:12px;height:14px;background:#3030c8;border:1px solid #f0f0f0;box-sizing:border-box"></div>
<div class="t" style="left:1031.00px;top:537.59px;font:normal bold 12.00px/1 'Liberation Sans', sans-serif;color:#ffff00;">?</div>
<div class="b" style="left:1043px;top:537px;width:13.4px;height:14px;background:#e01030;border:1px solid #f0f0f0;box-sizing:border-box"></div>
<div class="t" style="left:1045.30px;top:537.89px;font:normal bold 12.00px/1 'Liberation Sans', sans-serif;color:#ffffff;transform:scaleX(1.0620);transform-origin:0 0;">X</div>
<div class="t" style="left:619.80px;top:555.61px;font:normal normal 12.50px/1 'Liberation Sans', sans-serif;color:#2a3a60;transform:scaleX(0.8535);transform-origin:0 0;">Source</div>
<div class="t" style="left:679.00px;top:555.61px;font:normal normal 12.50px/1 'Liberation Sans', sans-serif;color:#2a3a60;transform:scaleX(0.8320);transform-origin:0 0;">ID</div>
<div class="t" style="left:713.50px;top:555.61px;font:normal normal 12.50px/1 'Liberation Sans', sans-serif;color:#2a3a60;transform:scaleX(0.8681);transform-origin:0 0;">Surf/Vol</div>
<div class="b" style="left:617.3px;top:569.9px;width:38.7px;height:17px;background:#f0f0f0;border-bottom:1px solid #d8d8d8;box-sizing:border-box"></div>
<div class="b" style="left:658.3px;top:569.9px;width:52.7px;height:17px;background:#f0f0f0;border-bottom:1px solid #d8d8d8;box-sizing:border-box"></div>
<div class="b" style="left:713.8px;top:569.9px;width:37.7px;height:17px;background:#f0f0f0;border-bottom:1px solid #d8d8d8;box-sizing:border-box"></div>
<div class="t" style="left:620.30px;top:572.01px;font:normal normal 12.50px/1 'Liberation Sans', sans-serif;color:#000;transform:scaleX(0.8280);transform-origin:0 0;">DAMIT</div>
<div class="t" style="left:661.00px;top:572.01px;font:normal normal 12.50px/1 'Liberation Sans', sans-serif;color:#000;transform:scaleX(0.7910);transform-origin:0 0;">3171</div>
<div class="t" style="left:716.50px;top:572.01px;font:normal normal 12.50px/1 'Liberation Sans', sans-serif;color:#000;transform:scaleX(0.8473);transform-origin:0 0;">1.058</div>
<div class="b" style="left:615px;top:590px;width:33.5px;height:19.4px;background:#30c030;border:1px solid #208020;box-sizing:border-box"></div>
<div class="t" style="left:623.00px;top:593.01px;font:normal bold 12.50px/1 'Liberation Sans', sans-serif;color:#000;transform:scaleX(0.9412);transform-origin:0 0;">Err</div>
<div class="t" style="left:652.70px;top:591.41px;font:italic normal 12.50px/1 'Liberation Sans', sans-serif;color:#3a4a70;transform:scaleX(0.8236);transform-origin:0 0;">Values in memory =&gt;</div>
<div class="b" style="left:754.1px;top:556.7px;width:300.6px;height:48px;background:#fdf5d6;border-left:2px solid #6a6a6a;border-top:1px solid #a0a0a0;box-sizing:border-box"></div>
<div class="t" style="left:777.30px;top:556.61px;font:normal normal 12.50px/1 'Liberation Sans', sans-serif;color:#000;transform:scaleX(0.7983);transform-origin:0 0;">Fit quality</div>
<div class="b" style="left:756.2px;top:570.4px;width:96.3px;height:20.2px;background:#fff;border:1px solid #6a6a6a;box-sizing:border-box"></div>
<div class="t" style="left:759.40px;top:572.61px;font:normal normal 12.50px/1 'Liberation Sans', sans-serif;color:#000;transform:scaleX(0.7980);transform-origin:0 0;">Poor fit</div>
<svg class="b" style="left:839px;top:577px" width="10" height="7"><path d="M1 1 L5 5 L9 1" stroke="#404040" stroke-width="1.2" fill="none"/></svg>
<div class="t" style="left:759.40px;top:591.41px;font:normal normal 12.50px/1 'Liberation Sans', sans-serif;color:#502080;transform:scaleX(0.7980);transform-origin:0 0;">Poor fit</div>
<div class="t" style="left:855.70px;top:556.61px;font:normal normal 12.50px/1 'Liberation Sans', sans-serif;color:#000;transform:scaleX(0.7896);transform-origin:0 0;">Ph Corrn</div>
<div class="b" style="left:857.6px;top:571.2px;width:37.6px;height:17px;background:#f0f0f0;border-bottom:1px solid #c8c8c8;box-sizing:border-box"></div>
<div class="t" style="left:860.00px;top:573.01px;font:normal normal 12.50px/1 'Liberation Sans', sans-serif;color:#000;">0°</div>
<div class="t" style="left:859.00px;top:590.41px;font:normal normal 12.50px/1 'Liberation Sans', sans-serif;color:#502080;">0°</div>
<div class="t" style="left:906.30px;top:556.21px;font:normal normal 12.50px/1 'Liberation Sans', sans-serif;color:#000;transform:scaleX(0.8086);transform-origin:0 0;">Minimum dia</div>
<div class="b" style="left:904px;top:570.8px;width:37px;height:19px;background:#f0f0f0;border-bottom:1px solid #c8c8c8;box-sizing:border-box"></div>
<div class="t" style="left:906.00px;top:572.51px;font:normal normal 12.50px/1 'Liberation Sans', sans-serif;color:#000;">39</div>
<div class="t" style="left:905.20px;top:590.81px;font:normal normal 12.50px/1 'Liberation Sans', sans-serif;color:#502080;">39</div>
<div class="b" style="left:943.7px;top:571.3px;width:29.3px;height:21.8px;background:#80f018;border:2px solid #f8f8f8;border-radius:3px;box-shadow:0 0 0 1px #c8c8c8;box-sizing:border-box"></div>
<div class="t" style="left:950.50px;top:575.01px;font:normal normal 12.50px/1 'Liberation Sans', sans-serif;color:#000;transform:scaleX(0.7995);transform-origin:0 0;">Set</div>
<div class="t" style="left:983.00px;top:557.61px;font:normal normal 12.50px/1 'Liberation Sans', sans-serif;color:#000;transform:scaleX(0.7937);transform-origin:0 0;">Maximum dia</div>
<div class="b" style="left:981.5px;top:570.8px;width:37.5px;height:19px;background:#f0f0f0;border-bottom:1px solid #c8c8c8;box-sizing:border-box"></div>
<div class="b" style="left:1021.5px;top:571.3px;width:29.2px;height:21.8px;background:#80f018;border:2px solid #f8f8f8;border-radius:3px;box-shadow:0 0 0 1px #c8c8c8;box-sizing:border-box"></div>
<div class="t" style="left:1028.50px;top:575.01px;font:normal normal 12.50px/1 'Liberation Sans', sans-serif;color:#000;transform:scaleX(0.7995);transform-origin:0 0;">Set</div>
<div class="b" style="left:984px;top:597.5px;width:21.3px;height:1.5px;background:repeating-linear-gradient(90deg,#6020a0 0 3px,transparent 3px 6px)"></div>
<div class="t" style="left:676.80px;top:608.16px;font:normal bold 12.80px/1 'Liberation Sans', sans-serif;color:#101828;transform:scaleX(0.9073);transform-origin:0 0;">Chords: poorly spaced across / significant differences from, SM</div>
<div class="t" style="left:620.00px;top:623.51px;font:normal normal 12.50px/1 'Liberation Sans', sans-serif;color:#3a4a70;transform:scaleX(0.8205);transform-origin:0 0;">Version info</div>
<div class="b" style="left:680px;top:622.7px;width:270.3px;height:16.3px;background:#f8f8f8;border-bottom:1px solid #8a8a8a;box-sizing:border-box"></div>
<div class="t" style="left:683.30px;top:625.01px;font:normal normal 12.50px/1 'Liberation Sans', sans-serif;color:#000;transform:scaleX(0.8296);transform-origin:0 0;">2019-05-07, Q=1</div>
<div class="t" style="left:619.50px;top:644.51px;font:normal normal 12.50px/1 'Liberation Sans', sans-serif;color:#3a4a70;transform:scaleX(0.8279);transform-origin:0 0;">Image scale</div>
<div class="b" style="left:681.2px;top:642.2px;width:268px;height:21.7px;background:#fff9c8"></div>
<div class="b" style="left:690.5px;top:647.6px;width:1px;height:4.4px;background:#b098c8"></div>
<div class="b" style="left:696.5px;top:647.6px;width:1px;height:4.4px;background:#b098c8"></div>
<div class="b" style="left:702.5px;top:647.6px;width:1px;height:4.4px;background:#b098c8"></div>
<div class="b" style="left:708.5px;top:647.6px;width:1px;height:4.4px;background:#b098c8"></div>
<div class="b" style="left:714.5px;top:647.6px;width:1px;height:4.4px;background:#b098c8"></div>
<div class="b" style="left:720.5px;top:647.6px;width:1px;height:4.4px;background:#b098c8"></div>
<div class="b" style="left:726.5px;top:647.6px;width:1px;height:4.4px;background:#b098c8"></div>
<div class="b" style="left:732.5px;top:647.6px;width:1px;height:4.4px;background:#b098c8"></div>
<div class="b" style="left:738.5px;top:647.6px;width:1px;height:4.4px;background:#b098c8"></div>
<div class="b" style="left:744.5px;top:647.6px;width:1px;height:4.4px;background:#b098c8"></div>
<div class="b" style="left:750.5px;top:647.6px;width:1px;height:4.4px;background:#b098c8"></div>
<div class="b" style="left:756.5px;top:647.6px;width:1px;height:4.4px;background:#b098c8"></div>
<div class="b" style="left:762.5px;top:647.6px;width:1px;height:4.4px;background:#b098c8"></div>
<div class="b" style="left:768.5px;top:647.6px;width:1px;height:4.4px;background:#b098c8"></div>
<div class="b" style="left:774.5px;top:647.6px;width:1px;height:4.4px;background:#b098c8"></div>
<div class="b" style="left:780.5px;top:647.6px;width:1px;height:4.4px;background:#b098c8"></div>
<div class="b" style="left:786.5px;top:647.6px;width:1px;height:4.4px;background:#b098c8"></div>
<div class="b" style="left:792.5px;top:647.6px;width:1px;height:4.4px;background:#b098c8"></div>
<div class="b" style="left:798.5px;top:647.6px;width:1px;height:4.4px;background:#b098c8"></div>
<div class="b" style="left:804.5px;top:647.6px;width:1px;height:4.4px;background:#b098c8"></div>
<div class="b" style="left:810.5px;top:647.6px;width:1px;height:4.4px;background:#b098c8"></div>
<div class="b" style="left:816.5px;top:647.6px;width:1px;height:4.4px;background:#b098c8"></div>
<div class="b" style="left:822.5px;top:647.6px;width:1px;height:4.4px;background:#b098c8"></div>
<div class="b" style="left:828.5px;top:647.6px;width:1px;height:4.4px;background:#b098c8"></div>
<div class="b" style="left:834.5px;top:647.6px;width:1px;height:4.4px;background:#b098c8"></div>
<div class="b" style="left:840.5px;top:647.6px;width:1px;height:4.4px;background:#b098c8"></div>
<div class="b" style="left:846.5px;top:647.6px;width:1px;height:4.4px;background:#b098c8"></div>
<div class="b" style="left:852.5px;top:647.6px;width:1px;height:4.4px;background:#b098c8"></div>
<div class="b" style="left:858.5px;top:647.6px;width:1px;height:4.4px;background:#b098c8"></div>
<div class="b" style="left:864.5px;top:647.6px;width:1px;height:4.4px;background:#b098c8"></div>
<div class="b" style="left:870.5px;top:647.6px;width:1px;height:4.4px;background:#b098c8"></div>
<div class="b" style="left:876.5px;top:647.6px;width:1px;height:4.4px;background:#b098c8"></div>
<div class="b" style="left:882.5px;top:647.6px;width:1px;height:4.4px;background:#b098c8"></div>
<div class="b" style="left:888.5px;top:647.6px;width:1px;height:4.4px;background:#b098c8"></div>
<div class="b" style="left:894.5px;top:647.6px;width:1px;height:4.4px;background:#b098c8"></div>
<div class="b" style="left:900.5px;top:647.6px;width:1px;height:4.4px;background:#b098c8"></div>
<div class="b" style="left:906.5px;top:647.6px;width:1px;height:4.4px;background:#b098c8"></div>
<div class="b" style="left:912.5px;top:647.6px;width:1px;height:4.4px;background:#b098c8"></div>
<div class="b" style="left:918.5px;top:647.6px;width:1px;height:4.4px;background:#b098c8"></div>
<div class="b" style="left:924.5px;top:647.6px;width:1px;height:4.4px;background:#b098c8"></div>
<div class="b" style="left:930.5px;top:647.6px;width:1px;height:4.4px;background:#b098c8"></div>
<div class="b" style="left:936.5px;top:647.6px;width:1px;height:4.4px;background:#b098c8"></div>
<div class="b" style="left:687px;top:658px;width:260px;height:4px;background:#e0e0e0;border:1px solid #c8c8d8;box-sizing:border-box"></div>
<svg class="b" style="left:877px;top:652.5px" width="9" height="12"><path d="M0.5 3.5 L4.25 0 L8 3.5 V11.5 H0.5Z" fill="#0a6fd0"/></svg>
<div class="b" style="left:960px;top:622.9px;width:96px;height:43.4px;background:#ffc4d0;border:3px solid #f4f4f4;border-radius:3px;box-shadow:0 0 0 1px #c8c8d0;box-sizing:border-box"></div>
<div class="t" style="left:970.90px;top:631.76px;font:normal bold 12.80px/1 'Liberation Sans', sans-serif;color:#a00020;transform:scaleX(0.9641);transform-origin:0 0;">Save/update</div>
<div class="t" style="left:973.60px;top:643.66px;font:normal bold 12.80px/1 'Liberation Sans', sans-serif;color:#a00020;transform:scaleX(0.9280);transform-origin:0 0;">model 3171</div></body></html>
